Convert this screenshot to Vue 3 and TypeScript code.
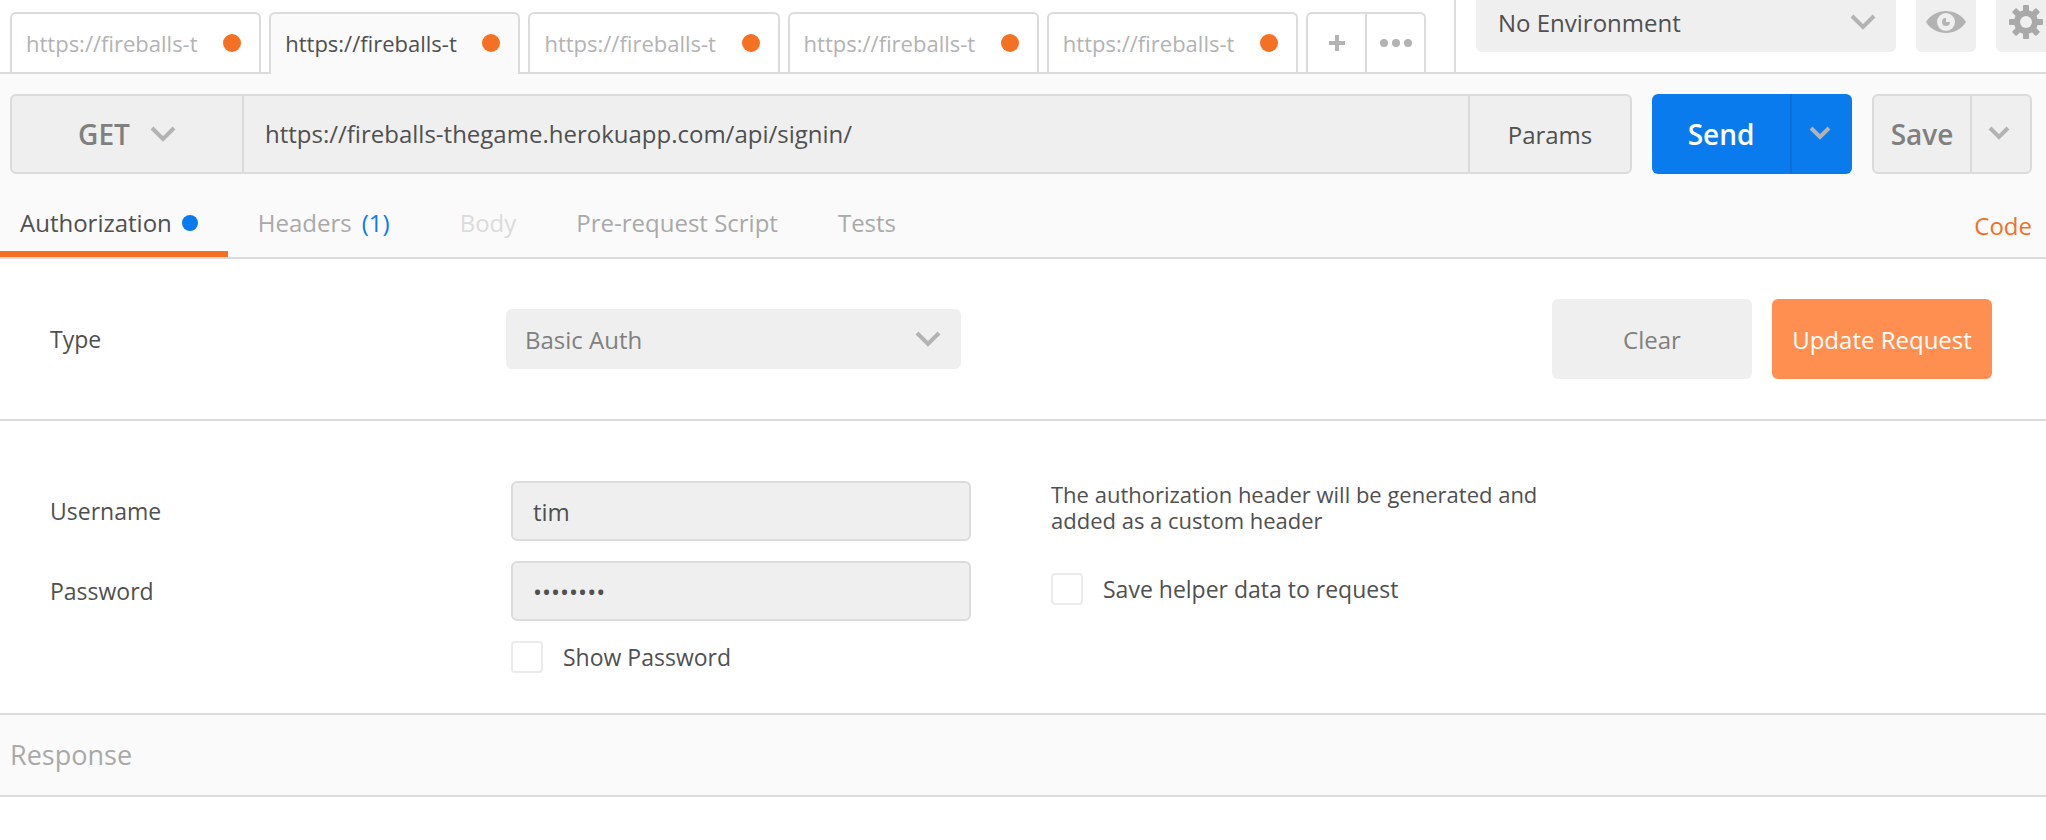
<script setup lang="ts">
import { ref } from 'vue'

interface RequestTab {
  id: number
  title: string
}

const requestTabs: RequestTab[] = [1, 2, 3, 4, 5].map((id) => ({ id, title: 'https://fireballs-t' }))
const activeTab = ref(2)

const url = ref('https://fireballs-thegame.herokuapp.com/api/signin/')
const username = ref('tim')
const password = ref('password')
const showPassword = ref(false)
const saveHelper = ref(false)
</script>

<template>
  <div class="app">
    <header class="topbar">
      <nav class="tabs" aria-label="Open requests">
        <button
          v-for="tab in requestTabs"
          :key="tab.id"
          type="button"
          class="tab"
          :class="{ active: tab.id === activeTab }"
          @click="activeTab = tab.id"
        >
          <span class="tab-title">{{ tab.title }}</span>
          <span class="tab-dot"></span>
        </button>
        <div class="tab-actions">
          <button type="button" aria-label="New tab">
            <svg width="16" height="16" viewBox="0 0 16 16"><path d="M6 0h4v6h6v4h-6v6H6v-6H0V6h6z" fill="#b3b3b3" /></svg>
          </button>
          <button type="button" aria-label="More">
            <svg width="32" height="8" viewBox="0 0 32 8" fill="#b3b3b3"><circle cx="4" cy="4" r="4" /><circle cx="16" cy="4" r="4" /><circle cx="28" cy="4" r="4" /></svg>
          </button>
        </div>
      </nav>
      <div class="environment">
        <div class="select env-select">
          <select aria-label="Environment"><option>No Environment</option></select>
          <svg class="chevron" width="26" height="17" viewBox="0 0 26 17"><path d="M2 2l11 11L24 2" /></svg>
        </div>
        <button type="button" class="env-button" aria-label="Environment quick look">
          <svg width="40" height="24" viewBox="0 0 40 24">
            <path d="M0 12C5 4.500 12 1 20 1s15 3.500 20 11c-5 7.500-12 11-20 11S5 19.500 0 12z" fill="#b3b3b3" />
            <circle cx="20" cy="12" r="9" fill="#efefef" />
            <path d="M20 8a4 4 0 1 0 4 4h-4z" fill="#b3b3b3" />
          </svg>
        </button>
        <button type="button" class="env-button" aria-label="Settings">
          <svg width="34" height="34" viewBox="-17 -17 34 34">
            <g fill="#a9a9a9">
              <rect v-for="a in [0, 45, 90, 135]" :key="a" x="-3" y="-17" width="6" height="34" rx="1" :transform="`rotate(${a})`" />
              <circle r="12" />
            </g>
            <circle r="6" fill="#efefef" />
          </svg>
        </button>
      </div>
    </header>

    <section class="request">
      <div class="request-row">
        <div class="url-group">
          <button type="button" class="method">
            GET
            <svg class="chevron" width="26" height="17" viewBox="0 0 26 17"><path d="M2 2l11 11L24 2" /></svg>
          </button>
          <input v-model="url" class="url" type="text" aria-label="Request URL" spellcheck="false" />
          <button type="button" class="params">Params</button>
        </div>
        <div class="split send">
          <button type="button" class="split-main">Send</button>
          <button type="button" class="split-more" aria-label="Send options">
            <svg class="chevron" width="22" height="15" viewBox="0 0 22 15"><path d="M2 2l9 9L20 2" /></svg>
          </button>
        </div>
        <div class="split save">
          <button type="button" class="split-main">Save</button>
          <button type="button" class="split-more" aria-label="Save options">
            <svg class="chevron" width="22" height="15" viewBox="0 0 22 15"><path d="M2 2l9 9L20 2" /></svg>
          </button>
        </div>
      </div>
      <nav class="sections" aria-label="Request sections">
        <button type="button" class="section active">Authorization<span class="section-dot"></span></button>
        <button type="button" class="section headers">Headers<span class="count">(1)</span></button>
        <button type="button" class="section" disabled>Body</button>
        <button type="button" class="section">Pre-request Script</button>
        <button type="button" class="section">Tests</button>
        <a class="code" href="#">Code</a>
      </nav>
    </section>

    <section class="auth-type">
      <label class="label" for="auth-type">Type</label>
      <div class="select type-select">
        <select id="auth-type"><option>Basic Auth</option></select>
        <svg class="chevron" width="26" height="17" viewBox="0 0 26 17"><path d="M2 2l11 11L24 2" /></svg>
      </div>
      <div class="auth-buttons">
        <button type="button" class="clear">Clear</button>
        <button type="button" class="update">Update Request</button>
      </div>
    </section>

    <section class="credentials">
      <div class="fields">
        <label class="label" for="username">Username</label>
        <input id="username" v-model="username" type="text" />
        <label class="label" for="password">Password</label>
        <input id="password" v-model="password" :type="showPassword ? 'text' : 'password'" />
        <label class="check show-check"><input v-model="showPassword" type="checkbox" />Show Password</label>
      </div>
      <div class="helper">
        <p>The authorization header will be generated and added as a custom header</p>
        <label class="check"><input v-model="saveHelper" type="checkbox" />Save helper data to request</label>
      </div>
    </section>

    <h2 class="response">Response</h2>
  </div>
</template>

<style>
body {
  margin: 0;
  background: #fff;
  overflow-x: hidden;
}
</style>

<style scoped>
.app {
  min-height: 100vh;
  overflow: hidden;
  color: #505050;
  font: 24px/32px "Open Sans", "Noto Sans", sans-serif;
}
.app * {
  box-sizing: border-box;
}
button,
input,
select {
  margin: 0;
  padding: 0;
  border: 0;
  background: none;
  color: inherit;
  font: inherit;
  outline: 0;
}
svg {
  display: block;
  flex: none;
}
.chevron path {
  fill: none;
  stroke: #b3b3b3;
  stroke-width: 4;
}

.topbar {
  display: flex;
  height: 74px;
  border-bottom: 2px solid #dbdbdb;
}
.tabs {
  flex: 1;
  min-width: 0;
  display: flex;
  gap: 8px;
  padding: 12px 28px 0 10px;
}
.tab {
  flex: 1;
  min-width: 0;
  height: 60px;
  display: flex;
  align-items: center;
  justify-content: space-between;
  padding: 0 18px 0 14px;
  border: 2px solid #dbdbdb;
  border-bottom: 0;
  border-radius: 6px 6px 0 0;
  color: #b3b3b3;
  font-size: 22px;
}
.tab.active {
  height: 62px;
  padding-bottom: 2px;
  background: #fafafa;
  color: #505050;
}
.tab-title {
  overflow: hidden;
  white-space: nowrap;
}
.tab-dot {
  flex: none;
  width: 18px;
  height: 18px;
  border-radius: 50%;
  background: #f47023;
}
.tab-actions {
  flex: none;
  width: 120px;
  height: 60px;
  display: flex;
  border: 2px solid #dbdbdb;
  border-bottom: 0;
  border-radius: 6px 6px 0 0;
}
.tab-actions button {
  flex: 1;
  display: flex;
  align-items: center;
  justify-content: center;
}
.tab-actions button + button {
  border-left: 2px solid #dbdbdb;
}
.environment {
  flex: none;
  width: 592px;
  display: flex;
  gap: 20px;
  padding-left: 20px;
  border-left: 2px solid #dbdbdb;
}
.select {
  display: flex;
  align-items: center;
  position: relative;
  background: #efefef;
}
.select select {
  width: 100%;
  height: 100%;
  padding: 2px 56px 0 19px;
  appearance: none;
}
.select .chevron {
  position: absolute;
  right: 20px;
  pointer-events: none;
}
.env-select,
.env-button {
  flex: none;
  height: 52px;
  padding-bottom: 8px;
  border-radius: 0 0 6px 6px;
  background: #efefef;
}
.env-select {
  width: 420px;
}
.env-select select {
  padding-left: 22px;
}
.env-button {
  width: 60px;
  display: flex;
  align-items: center;
  justify-content: center;
}

.request {
  background: #fafafa;
  border-bottom: 2px solid #dbdbdb;
}
.request-row {
  display: flex;
  gap: 20px;
  padding: 20px 14px 0 10px;
}
.url-group {
  flex: 1;
  min-width: 0;
  display: flex;
  height: 80px;
  border: 2px solid #dbdbdb;
  border-radius: 6px;
  background: #efefef;
}
.method {
  width: 232px;
  display: flex;
  align-items: center;
  justify-content: center;
  gap: 20px;
  border-right: 2px solid #dbdbdb;
  color: #808080;
  font-size: 28px;
  font-weight: 600;
}
.url {
  flex: 1;
  min-width: 0;
  padding-left: 21px;
}
.params {
  width: 162px;
  padding-top: 2px;
  border-left: 2px solid #dbdbdb;
}
.split {
  height: 80px;
  display: flex;
  border-radius: 6px;
  font-size: 28px;
  font-weight: 600;
}
.split-main {
  flex: 1;
}
.split-more {
  width: 62px;
  display: flex;
  align-items: center;
  justify-content: center;
  padding: 0 4px 2px 0;
}
.send {
  width: 200px;
  background: #097bed;
  color: #fff;
}
.send .split-more {
  border-left: 2px solid #0d6fd1;
}
.save {
  width: 160px;
  border: 2px solid #dbdbdb;
  background: #efefef;
  color: #808080;
}
.save .split-more {
  width: 60px;
  border-left: 2px solid #dbdbdb;
}
.sections {
  height: 83px;
  display: flex;
  align-items: stretch;
  padding: 20px 14px 0 0;
}
.section {
  display: flex;
  align-items: center;
  padding: 0 30px;
  border-bottom: 6px solid transparent;
  color: #a9a9a9;
}
.section.active {
  padding-left: 20px;
  border-color: #f47023;
  color: #505050;
}
.section:disabled {
  color: #dbdbdb;
}
.headers {
  padding-right: 40px;
}
.section-dot {
  width: 16px;
  height: 16px;
  margin-left: 10px;
  border-radius: 50%;
  background: #097bed;
}
.count {
  margin-left: 10px;
  color: #097bed;
}
.code {
  margin-left: auto;
  align-self: center;
  color: #f47023;
  text-decoration: none;
}

.auth-type {
  display: flex;
  align-items: center;
  height: 162px;
  padding: 0 54px 0 50px;
  border-bottom: 2px solid #dbdbdb;
}
.label,
.check {
  font-size: 23px;
}
.auth-type .label {
  width: 456px;
}
.type-select {
  width: 455px;
  height: 60px;
  border-radius: 6px;
  color: #808080;
}
.auth-buttons {
  display: flex;
  gap: 20px;
  margin-left: auto;
}
.auth-buttons button {
  height: 80px;
  padding-top: 2px;
  border-radius: 6px;
}
.clear {
  width: 200px;
  background: #efefef;
  color: #808080;
}
.update {
  width: 220px;
  background: #ff8f50;
  color: #fff;
}

.credentials {
  display: flex;
  gap: 80px;
  padding: 60px 50px 40px;
  border-bottom: 2px solid #dbdbdb;
}
.fields {
  flex: none;
  display: grid;
  grid-template-columns: 461px 460px;
  row-gap: 20px;
  align-items: center;
}
.fields > input {
  height: 60px;
  padding: 0 20px;
  border: 2px solid #dbdbdb;
  border-radius: 6px;
  background: #efefef;
}
.show-check {
  grid-column: 2;
}
.check {
  display: flex;
  align-items: center;
  gap: 20px;
}
.check input {
  flex: none;
  width: 32px;
  height: 32px;
  border: 2px solid #ebebeb;
  border-radius: 4px;
  appearance: none;
  background: #fff;
}
.check input:checked {
  background: #f47023;
}
.helper p {
  width: 500px;
  margin: 0 0 40px;
  font-size: 22px;
  line-height: 26px;
}
.response {
  height: 82px;
  margin: 0;
  padding-left: 10px;
  border-bottom: 2px solid #dbdbdb;
  background: #fafafa;
  color: #a9a9a9;
  font-size: 27px;
  font-weight: 400;
  line-height: 80px;
}
</style>
